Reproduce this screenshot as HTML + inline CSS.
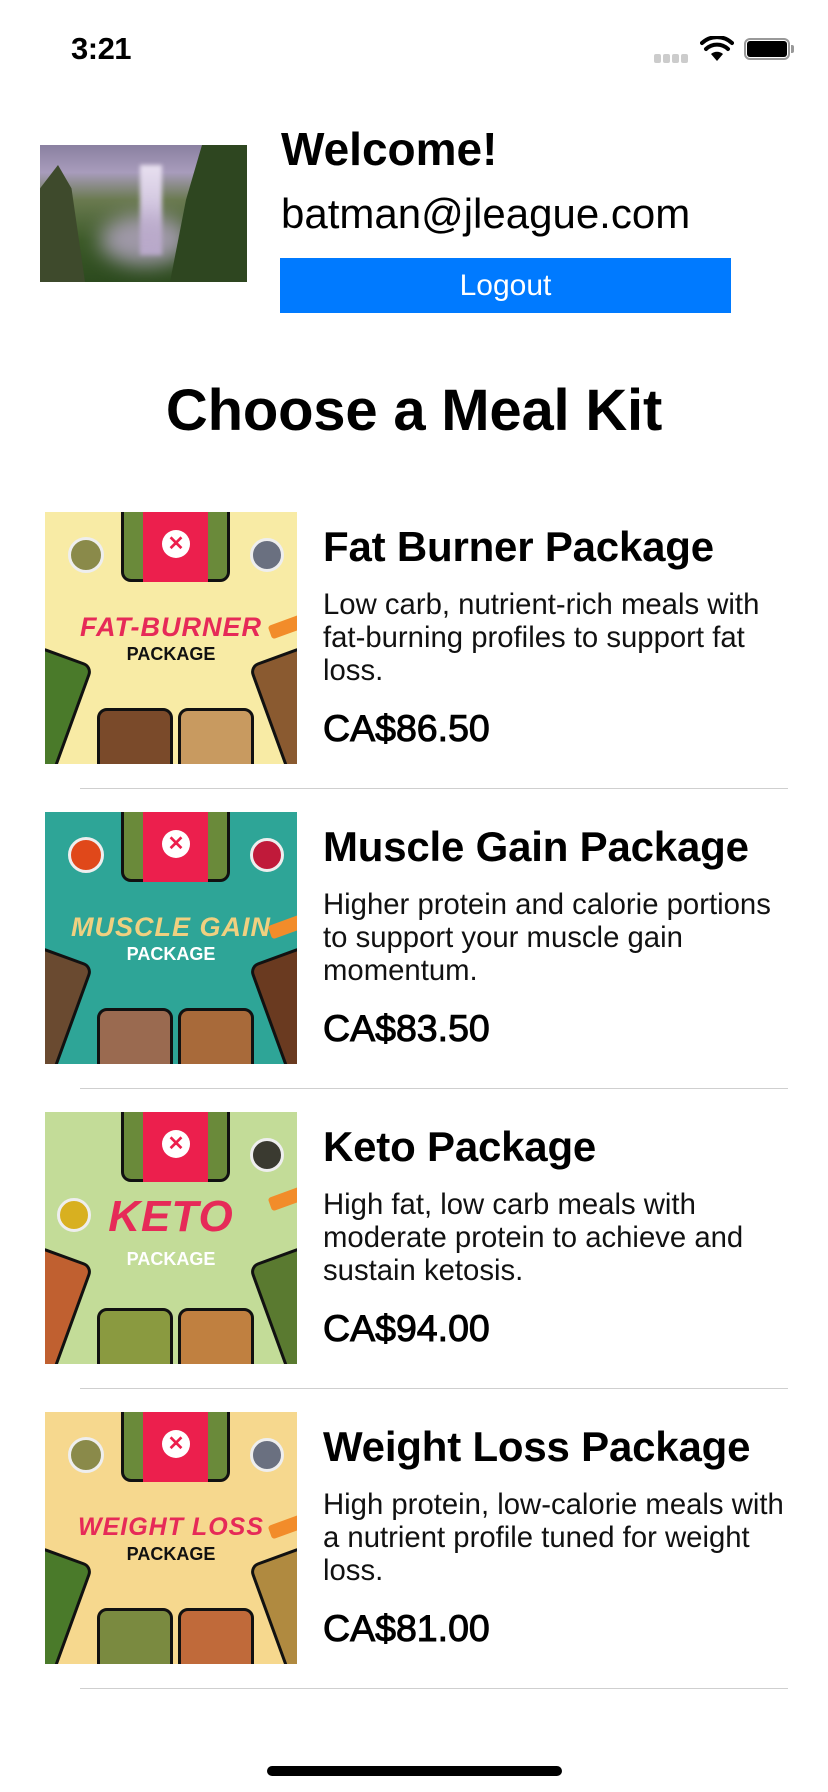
<!DOCTYPE html>
<html><head><meta charset="utf-8">
<style>
*{margin:0;padding:0;box-sizing:border-box}
body{width:828px;height:1792px;background:#fff;position:relative;overflow:hidden;font-family:"Liberation Sans",Arial,sans-serif;color:#000}
.a{position:absolute;white-space:nowrap}
.img{position:absolute;width:252px;height:252px;overflow:hidden}
.tray{position:absolute;background:#2a2a2a;border-radius:10px;border:3px solid #111}
.red{position:absolute;left:98px;top:0;width:65px;height:70px;background:#ec1f4d}
.logo{position:absolute;left:117px;top:18px;width:28px;height:28px;border-radius:50%;background:#fff;color:#ec1f4d;font:bold 20px/28px "Liberation Sans",sans-serif;text-align:center}
.bowl{position:absolute;border-radius:50%;border:3px solid #eee}
.script{position:absolute;left:0;width:252px;text-align:center;top:98px;font:italic bold 27px/34px "Liberation Sans",sans-serif;letter-spacing:1px}
.pk{position:absolute;left:0;width:252px;text-align:center;top:131px;font:bold 18px/22px "Liberation Sans",sans-serif}
.carrot{position:absolute;left:224px;top:108px;width:34px;height:14px;background:#f28c2a;transform:rotate(-20deg);border-radius:3px}
.t{position:absolute;left:323px;font-weight:bold;font-size:42px;line-height:46px;letter-spacing:-0.2px}
.d{position:absolute;left:323px;font-size:29.3px;line-height:33px;color:#111}
.p{position:absolute;left:323px;font-size:37.5px;line-height:44px;-webkit-text-stroke:1px #000}
.sep{position:absolute;left:80px;width:708px;height:1px;background:#cfcfcf}
</style></head><body>

<div class="a" style="left:71px;top:30px;font-size:31px;line-height:38px;font-weight:bold;letter-spacing:-0.5px">3:21</div>
<div class="a" style="left:654px;top:54px;width:36px;height:9px">
 <span style="position:absolute;left:0;width:7px;height:9px;border-radius:2px;background:#ccc"></span>
 <span style="position:absolute;left:9px;width:7px;height:9px;border-radius:2px;background:#ccc"></span>
 <span style="position:absolute;left:18px;width:7px;height:9px;border-radius:2px;background:#ccc"></span>
 <span style="position:absolute;left:27px;width:7px;height:9px;border-radius:2px;background:#ccc"></span>
</div>
<svg class="a" style="left:700px;top:36px" width="34" height="26" viewBox="0 0 34 26">
 <path d="M17 25 L11 18 A9 9 0 0 1 23 18 Z" fill="#000"/>
 <path d="M6 13 A16 16 0 0 1 28 13" stroke="#000" stroke-width="4" fill="none" stroke-linecap="round"/>
 <path d="M2 7 A22 22 0 0 1 32 7" stroke="#000" stroke-width="4" fill="none" stroke-linecap="round"/>
</svg>
<div class="a" style="left:744px;top:38px;width:46px;height:22px;border:2px solid #999;border-radius:6px"></div>
<div class="a" style="left:747px;top:41px;width:40px;height:16px;background:#000;border-radius:3px"></div>
<div class="a" style="left:791px;top:45px;width:3px;height:8px;background:#999;border-radius:0 2px 2px 0"></div>

<div class="a" style="left:40px;top:145px;width:207px;height:137px;overflow:hidden;background:linear-gradient(180deg,#8a80a0 0%,#a89cbc 20%,#6a7a50 40%,#3c5a28 70%,#2c4a1e 100%)">
 <div style="position:absolute;left:100px;top:20px;width:22px;height:90px;background:linear-gradient(180deg,#e8e0f0,#b8a8cc);filter:blur(2px)"></div>
 <div style="position:absolute;left:60px;top:70px;width:90px;height:50px;background:#b8a8c8;border-radius:50%;filter:blur(10px);opacity:.8"></div>
 <div style="position:absolute;left:130px;top:0;width:80px;height:137px;background:#2e4620;clip-path:polygon(40% 0,100% 0,100% 100%,0 100%,20% 40%)"></div>
 <div style="position:absolute;left:0;top:20px;width:45px;height:117px;background:#3e4a2c;clip-path:polygon(40% 0,70% 20%,100% 100%,0 100%,0 20%)"></div>
</div>
<div class="a" style="left:281px;top:123px;font-size:46px;line-height:52px;font-weight:bold">Welcome!</div>
<div class="a" style="left:281px;top:190px;font-size:42px;line-height:48px">batman@jleague.com</div>
<div class="a" style="left:280px;top:258px;width:451px;height:55px;background:#007aff;color:#fff;text-align:center;font-size:30px;line-height:55px">Logout</div>

<div class="a" style="left:0;width:828px;text-align:center;top:377px;font-size:58px;line-height:68px;font-weight:bold;letter-spacing:-0.2px">Choose a Meal Kit</div>

<!-- Row 1 -->
<div class="img" style="left:45px;top:512px;background:#f8eba5">
 <div class="tray" style="left:76px;top:-10px;width:109px;height:80px;background:#6a8a3a"></div>
 <div class="red"></div><div class="logo">✕</div>
 <div class="bowl" style="left:23px;top:25px;width:36px;height:36px;background:#8a8a4a"></div>
 <div class="bowl" style="left:205px;top:26px;width:34px;height:34px;background:#6a7080"></div>
 <div class="script" style="color:#e62a58">FAT-BURNER</div>
 <div class="pk" style="color:#111">PACKAGE</div>
 <div class="carrot"></div>
 <div class="tray" style="left:52px;top:196px;width:76px;height:70px;background:#7a4a2a"></div>
 <div class="tray" style="left:133px;top:196px;width:76px;height:70px;background:#c89a60"></div>
 <div class="tray" style="left:-30px;top:140px;width:60px;height:120px;background:#4a7a2a;transform:rotate(20deg)"></div>
 <div class="tray" style="left:222px;top:140px;width:60px;height:120px;background:#8a5a30;transform:rotate(-20deg)"></div>
</div>
<div class="t" style="top:524px">Fat Burner Package</div>
<div class="d" style="top:588px">Low carb, nutrient-rich meals with<br>fat-burning profiles to support fat<br>loss.</div>
<div class="p" style="top:706px">CA$86.50</div>
<div class="sep" style="top:788px"></div>

<!-- Row 2 -->
<div class="img" style="left:45px;top:812px;background:#2ea597">
 <div class="tray" style="left:76px;top:-10px;width:109px;height:80px;background:#6a8a3a"></div>
 <div class="red"></div><div class="logo">✕</div>
 <div class="bowl" style="left:23px;top:25px;width:36px;height:36px;background:#e0481a"></div>
 <div class="bowl" style="left:205px;top:26px;width:34px;height:34px;background:#c01a3a"></div>
 <div class="script" style="color:#f0d080">MUSCLE GAIN</div>
 <div class="pk" style="color:#fff">PACKAGE</div>
 <div class="carrot"></div>
 <div class="tray" style="left:52px;top:196px;width:76px;height:70px;background:#9a6a50"></div>
 <div class="tray" style="left:133px;top:196px;width:76px;height:70px;background:#a86a3a"></div>
 <div class="tray" style="left:-30px;top:140px;width:60px;height:120px;background:#6a4a30;transform:rotate(20deg)"></div>
 <div class="tray" style="left:222px;top:140px;width:60px;height:120px;background:#6a3a20;transform:rotate(-20deg)"></div>
</div>
<div class="t" style="top:824px">Muscle Gain Package</div>
<div class="d" style="top:888px">Higher protein and calorie portions<br>to support your muscle gain<br>momentum.</div>
<div class="p" style="top:1006px">CA$83.50</div>
<div class="sep" style="top:1088px"></div>

<!-- Row 3 -->
<div class="img" style="left:45px;top:1112px;background:#c3dc98">
 <div class="tray" style="left:76px;top:-10px;width:109px;height:80px;background:#6a8a3a"></div>
 <div class="red"></div><div class="logo">✕</div>
 <div class="bowl" style="left:205px;top:26px;width:34px;height:34px;background:#3a3a30"></div>
 <div class="bowl" style="left:12px;top:86px;width:34px;height:34px;background:#d8b020"></div>
 <div class="script" style="color:#e62a58;font-size:44px;top:88px">KETO</div>
 <div class="pk" style="color:#fff;top:136px">PACKAGE</div>
 <div class="carrot" style="top:80px"></div>
 <div class="tray" style="left:52px;top:196px;width:76px;height:70px;background:#8a9a40"></div>
 <div class="tray" style="left:133px;top:196px;width:76px;height:70px;background:#c08040"></div>
 <div class="tray" style="left:-30px;top:140px;width:60px;height:120px;background:#c06030;transform:rotate(20deg)"></div>
 <div class="tray" style="left:222px;top:140px;width:60px;height:120px;background:#5a7a30;transform:rotate(-20deg)"></div>
</div>
<div class="t" style="top:1124px">Keto Package</div>
<div class="d" style="top:1188px">High fat, low carb meals with<br>moderate protein to achieve and<br>sustain ketosis.</div>
<div class="p" style="top:1306px">CA$94.00</div>
<div class="sep" style="top:1388px"></div>

<!-- Row 4 -->
<div class="img" style="left:45px;top:1412px;background:#f6d88e">
 <div class="tray" style="left:76px;top:-10px;width:109px;height:80px;background:#6a8a3a"></div>
 <div class="red"></div><div class="logo">✕</div>
 <div class="bowl" style="left:23px;top:25px;width:36px;height:36px;background:#8a8a4a"></div>
 <div class="bowl" style="left:205px;top:26px;width:34px;height:34px;background:#6a7080"></div>
 <div class="script" style="color:#e62a58;font-size:25px">WEIGHT LOSS</div>
 <div class="pk" style="color:#111">PACKAGE</div>
 <div class="carrot"></div>
 <div class="tray" style="left:52px;top:196px;width:76px;height:70px;background:#7a8a40"></div>
 <div class="tray" style="left:133px;top:196px;width:76px;height:70px;background:#c06a3a"></div>
 <div class="tray" style="left:-30px;top:140px;width:60px;height:120px;background:#4a7a2a;transform:rotate(20deg)"></div>
 <div class="tray" style="left:222px;top:140px;width:60px;height:120px;background:#b08a40;transform:rotate(-20deg)"></div>
</div>
<div class="t" style="top:1424px">Weight Loss Package</div>
<div class="d" style="top:1488px">High protein, low-calorie meals with<br>a nutrient profile tuned for weight<br>loss.</div>
<div class="p" style="top:1606px">CA$81.00</div>
<div class="sep" style="top:1688px"></div>

<div class="a" style="left:267px;top:1766px;width:295px;height:10px;border-radius:5px;background:#000"></div>
</body></html>
